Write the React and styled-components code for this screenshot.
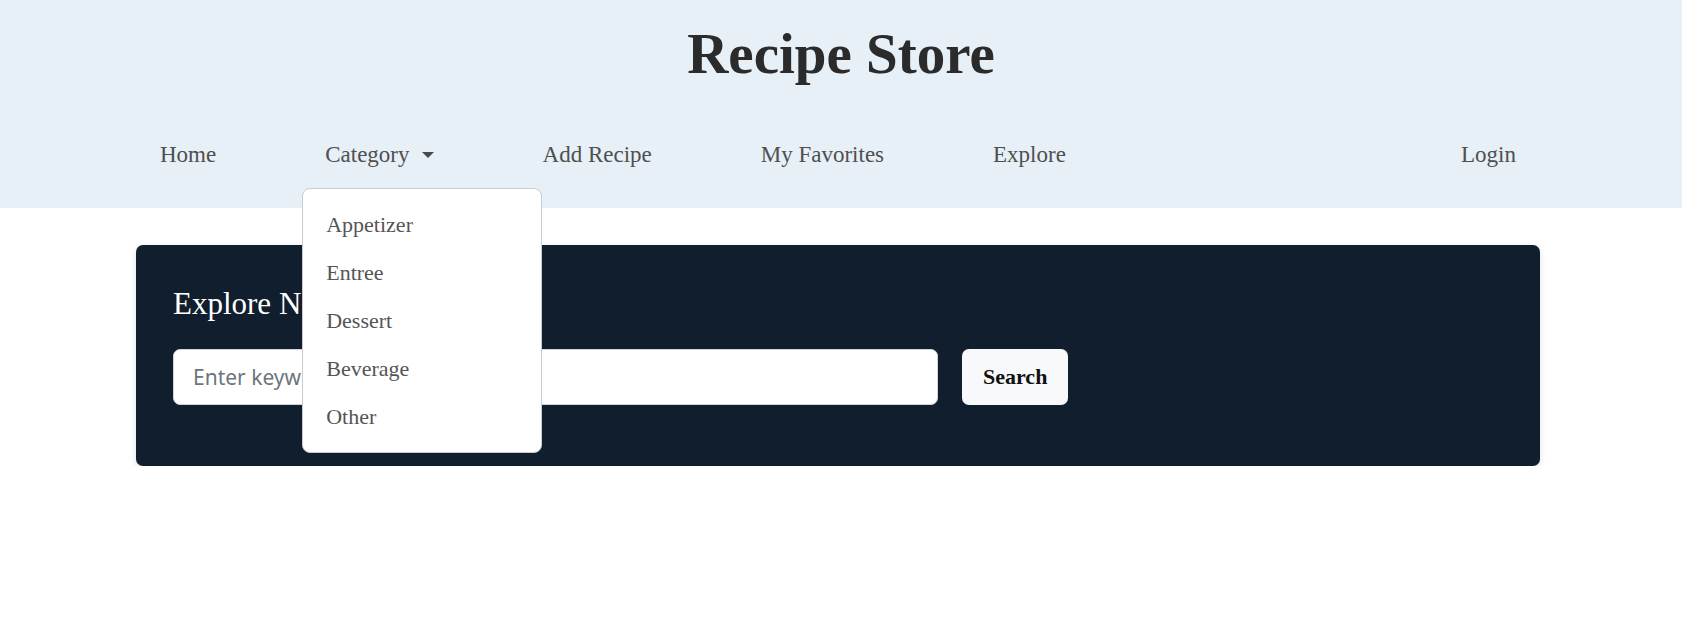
import React, { useState } from "react";
import styled, { createGlobalStyle } from "styled-components";

const GlobalStyle = createGlobalStyle`
  body {
    margin: 0;
    background: #ffffff;
    font-family: "Liberation Serif", "Times New Roman", serif;
  }
`;

const Header = styled.header`
  background-color: #e7eff7;
  padding: 20px 0 36px;
`;

const Title = styled.h1`
  margin: 0;
  text-align: center;
  font-size: 57px;
  line-height: 67px;
  font-weight: 700;
  color: #2b2b2b;
`;

const Nav = styled.nav`
  display: flex;
  align-items: center;
  gap: 109px;
  margin: 51px 142px 0 136px;
  padding: 0 24px;
`;

const NavItem = styled.div`
  position: relative;
  display: flex;
  align-items: center;
  font-size: 23px;
  line-height: 34px;
  color: #4f4f4f;
  cursor: pointer;
  margin-left: ${(p) => (p.$right ? "auto" : "0")};
`;

const Caret = styled.span`
  display: inline-block;
  margin-left: 12px;
  border-top: 6px solid #4a4a4a;
  border-left: 6px solid transparent;
  border-right: 6px solid transparent;
`;

const Dropdown = styled.ul`
  position: absolute;
  top: calc(100% + 16px);
  left: -23px;
  width: 238px;
  margin: 0;
  padding: 12px 0 11px;
  list-style: none;
  background: #ffffff;
  border: 1px solid #c6ccd2;
  border-radius: 8px;
  z-index: 10;
`;

const DropItem = styled.li`
  padding: 8px 23px;
  font-size: 22px;
  line-height: 32px;
  color: #555555;
`;

const Card = styled.section`
  margin: 37px 142px 0 136px;
  padding: 40px 37px 61px;
  background-color: #101e2e;
  border-radius: 7px;
  box-shadow: 0 2px 6px rgba(0, 0, 0, 0.12);
`;

const CardTitle = styled.h2`
  margin: 0 0 27px;
  font-size: 31px;
  line-height: 37px;
  font-weight: 400;
  color: #ffffff;
`;

const SearchRow = styled.div`
  display: flex;
  align-items: center;
  gap: 24px;
`;

const SearchInput = styled.input`
  box-sizing: border-box;
  width: 765px;
  height: 56px;
  padding: 0 19px;
  border: 1px solid #ced4da;
  border-radius: 7px;
  background: #ffffff;
  font-family: "Noto Sans", "Open Sans", sans-serif;
  font-size: 21px;
  color: #212529;
  outline: none;
  &::placeholder {
    color: #6c757d;
  }
`;

const SearchButton = styled.button`
  box-sizing: border-box;
  height: 56px;
  padding: 0 21px;
  border: none;
  border-radius: 7px;
  background-color: #f8f9fa;
  font-family: "Liberation Serif", "Times New Roman", serif;
  font-size: 22px;
  font-weight: 700;
  color: #111111;
  cursor: pointer;
`;

const categories = ["Appetizer", "Entree", "Dessert", "Beverage", "Other"];

const App = () => {
  const [keyword, setKeyword] = useState("");

  return (
    <>
      <GlobalStyle />
      <Header>
        <Title>Recipe Store</Title>
        <Nav>
          <NavItem>Home</NavItem>
          <NavItem>
            Category
            <Caret />
            <Dropdown>
              {categories.map((c) => (
                <DropItem key={c}>{c}</DropItem>
              ))}
            </Dropdown>
          </NavItem>
          <NavItem>Add Recipe</NavItem>
          <NavItem>My Favorites</NavItem>
          <NavItem>Explore</NavItem>
          <NavItem $right>Login</NavItem>
        </Nav>
      </Header>
      <Card>
        <CardTitle>Explore New Recipes</CardTitle>
        <SearchRow>
          <SearchInput
            type="text"
            placeholder="Enter keywords"
            value={keyword}
            onChange={(e) => setKeyword(e.target.value)}
          />
          <SearchButton>Search</SearchButton>
        </SearchRow>
      </Card>
    </>
  );
};

export default App;
